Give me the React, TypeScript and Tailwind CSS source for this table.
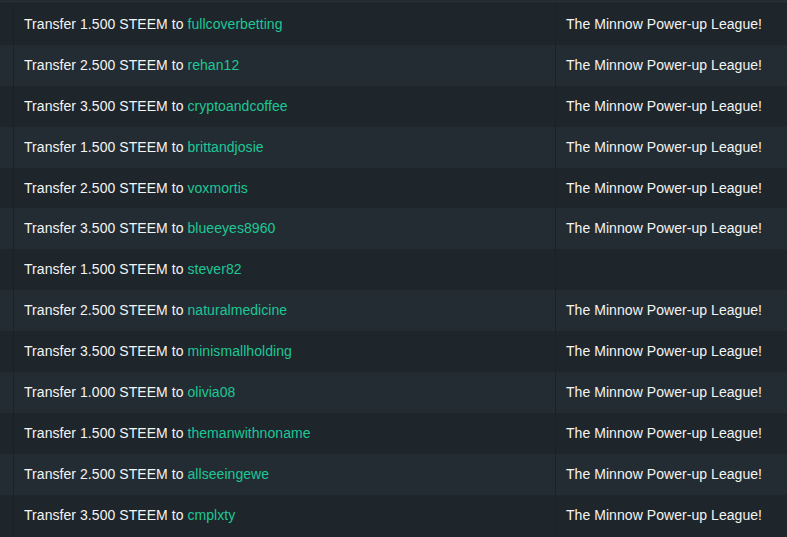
const rows = [
  { amount: '1.500', to: 'fullcoverbetting', memo: 'The Minnow Power-up League!' },
  { amount: '2.500', to: 'rehan12', memo: 'The Minnow Power-up League!' },
  { amount: '3.500', to: 'cryptoandcoffee', memo: 'The Minnow Power-up League!' },
  { amount: '1.500', to: 'brittandjosie', memo: 'The Minnow Power-up League!' },
  { amount: '2.500', to: 'voxmortis', memo: 'The Minnow Power-up League!' },
  { amount: '3.500', to: 'blueeyes8960', memo: 'The Minnow Power-up League!' },
  { amount: '1.500', to: 'stever82', memo: '' },
  { amount: '2.500', to: 'naturalmedicine', memo: 'The Minnow Power-up League!' },
  { amount: '3.500', to: 'minismallholding', memo: 'The Minnow Power-up League!' },
  { amount: '1.000', to: 'olivia08', memo: 'The Minnow Power-up League!' },
  { amount: '1.500', to: 'themanwithnoname', memo: 'The Minnow Power-up League!' },
  { amount: '2.500', to: 'allseeingewe', memo: 'The Minnow Power-up League!' },
  { amount: '3.500', to: 'cmplxty', memo: 'The Minnow Power-up League!' },
];

export default function App() {
  return (
    <div
      className="w-[787px] h-[537px] overflow-hidden bg-[#1e252b] text-[14px] leading-[21px] text-[#f4f4f4] tracking-[0.004em]"
      style={{ fontFamily: '"Liberation Sans", Arial, sans-serif' }}
    >
      <div className="h-[4px] bg-[#242d33] border-b border-[#1b2227]" />
      {rows.map((row, i) => (
        <div
          key={i}
          className={`flex h-[40.9px] ${i % 2 === 1 ? 'bg-[#232c32]' : 'bg-[#1e252b]'}`}
        >
          <div className="w-[13px] shrink-0" />
          <div className="w-[542px] shrink-0 flex items-center border-l border-[#1b2227] px-[10px] whitespace-nowrap">
            <span>
              Transfer {row.amount} STEEM to{' '}
              <a className="text-[#1dc796]">{row.to}</a>
            </span>
          </div>
          <div className="flex-1 flex items-center border-l border-[#1b2227] px-[10px] whitespace-nowrap">
            {row.memo}
          </div>
        </div>
      ))}
    </div>
  );
}
